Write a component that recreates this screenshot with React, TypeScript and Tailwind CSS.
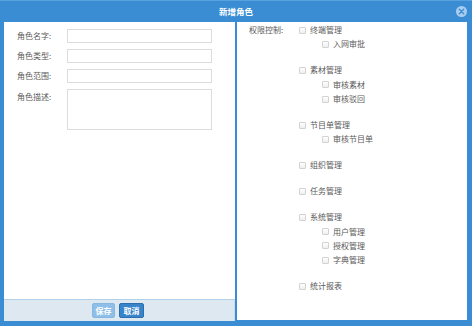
import React from "react";

type Node = { label: string; children?: string[] };

const groups: Node[] = [
  { label: "终端管理", children: ["入网审批"] },
  { label: "素材管理", children: ["审核素材", "审核驳回"] },
  { label: "节目单管理", children: ["审核节目单"] },
  { label: "组织管理" },
  { label: "任务管理" },
  { label: "系统管理", children: ["用户管理", "授权管理", "字典管理"] },
  { label: "统计报表" },
];

function Box() {
  return (
    <span className="inline-block w-[7px] h-[7px] border border-[#d2d2d2] rounded-[1px] bg-gradient-to-b from-white to-[#efefef] shrink-0" />
  );
}

function Row({ text }: { text: string }) {
  return (
    <div className="flex items-center h-[14.3px] gap-[4px]">
      <Box />
      <span className="leading-none">{text}</span>
    </div>
  );
}

export default function App() {
  const fields = ["角色名字:", "角色类型:", "角色范围:"];
  return (
    <div
      className="w-[472px] h-[326px] bg-[#3b8dd3] flex flex-col text-[8px] text-[#5a5a5a]"
      style={{ fontFamily: '"Noto Sans CJK SC", "Noto Sans", sans-serif' }}
    >
      <div className="h-[22px] relative flex items-center justify-center text-white font-bold text-[8.5px] border-t border-[#5aa2de]">
        <span className="leading-none">新增角色</span>
        <span className="absolute right-[5px] top-[5px] w-[11px] h-[11px] rounded-full bg-[#a9cdee] flex items-center justify-center">
          <svg width="7" height="7" viewBox="0 0 7 7">
            <path d="M1.3 1.3 L5.7 5.7 M5.7 1.3 L1.3 5.7" stroke="#3b8dd3" strokeWidth="1.3" strokeLinecap="round" />
          </svg>
        </span>
      </div>
      <div className="flex h-[299px] pl-[4px] gap-[2px]">
        <div className="w-[231px] flex flex-col">
          <div className="flex-1 bg-white pt-[7px] pl-[13px] flex flex-col gap-[6px]">
            {fields.map((f) => (
              <div key={f} className="flex items-center">
                <span className="w-[49.5px] leading-none">{f}</span>
                <div className="w-[145px] h-[14px] border border-[#dcdcdc] bg-white" />
              </div>
            ))}
            <div className="flex items-start">
              <span className="w-[49.5px] leading-none pt-[4px]">角色描述:</span>
              <div className="w-[145px] h-[41px] border border-[#dcdcdc] bg-white" />
            </div>
          </div>
          <div className="h-[22px] bg-[#dde8f1] border-t border-[#b3d0ea] border-r border-r-[#c8dcee] flex items-center justify-center gap-[4px] pr-[2px]">
            <span className="w-[23px] h-[15px] bg-[#8fbfe8] border border-[#86b7e2] rounded-[2px] text-white font-bold flex items-center justify-center leading-none">
              保存
            </span>
            <span className="w-[25px] h-[15px] bg-[#3784ca] border border-[#2a6fae] rounded-[2px] text-white font-bold flex items-center justify-center leading-none">
              取消
            </span>
          </div>
        </div>
        <div className="w-[230px] h-[298px] bg-white flex pl-[12px] pt-[1px]">
          <div className="w-[50px] h-[14.3px] flex items-center">
            <span className="leading-none">权限控制:</span>
          </div>
          <div className="flex flex-col">
            {groups.map((g) => (
              <div key={g.label} className="mb-[11.7px]">
                <Row text={g.label} />
                {g.children?.map((c) => (
                  <div key={c} className="pl-[23px]">
                    <Row text={c} />
                  </div>
                ))}
              </div>
            ))}
          </div>
        </div>
      </div>
    </div>
  );
}
